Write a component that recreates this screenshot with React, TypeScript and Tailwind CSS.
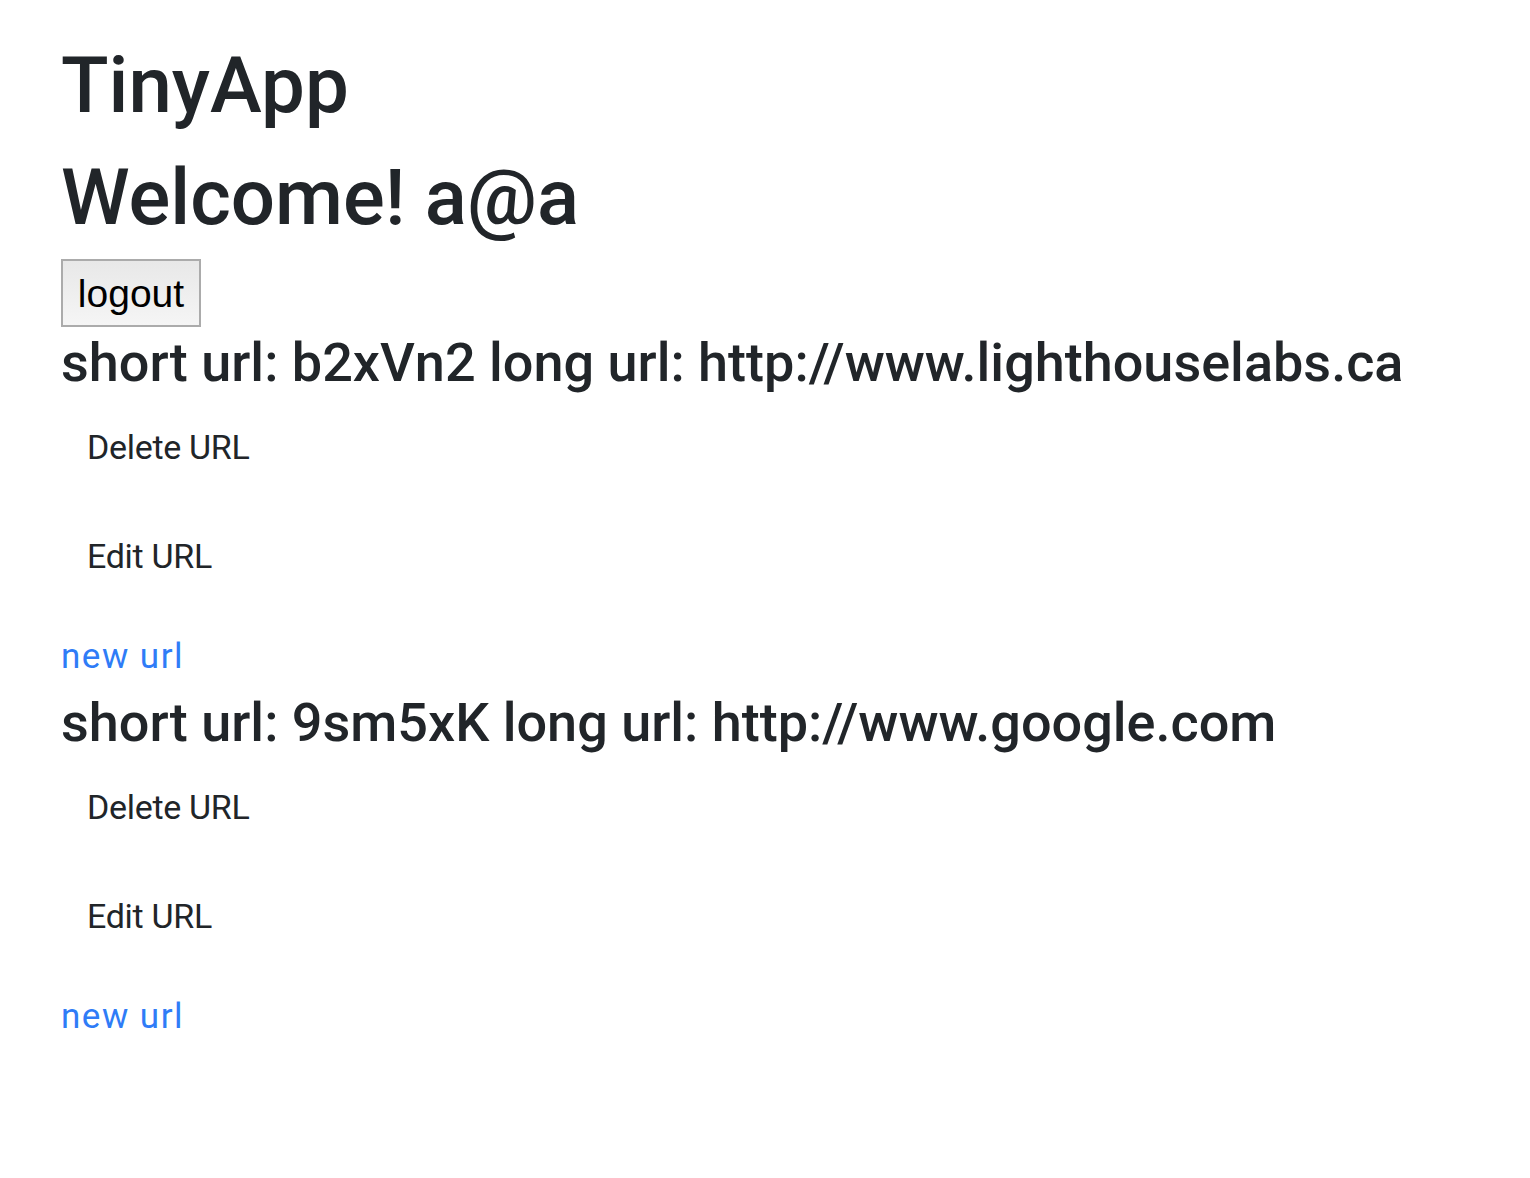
import React from "react";

type Url = { short: string; long: string };

const urls: Url[] = [
  { short: "b2xVn2", long: "http://www.lighthouselabs.ca" },
  { short: "9sm5xK", long: "http://www.google.com" },
];

function UrlBlock({ url }: { url: Url }) {
  return (
    <div className="mb-[10px]">
      <h3 className="text-[54px] leading-[64px] font-medium mb-[14px] whitespace-nowrap">
        short url: {url.short} long url: {url.long}
      </h3>
      <form className="mb-[33px]" onSubmit={(e) => e.preventDefault()}>
        <button
          type="submit"
          className="text-[34px] tracking-[-0.3px] leading-[48px] px-[24px] py-[12px] border-2 border-transparent text-[#212529] bg-transparent"
        >
          Delete URL
        </button>
      </form>
      <form className="mb-[39px]" onSubmit={(e) => e.preventDefault()}>
        <button
          type="submit"
          className="text-[34px] tracking-[-0.3px] leading-[48px] px-[24px] py-[12px] border-2 border-transparent text-[#212529] bg-transparent"
        >
          Edit URL
        </button>
      </form>
      <a href="#" className="block w-fit text-[35px] tracking-[1.5px] leading-[48px] text-[#2f7cf7]">
        new url
      </a>
    </div>
  );
}

export default function App() {
  return (
    <div className="min-h-screen bg-white text-[#212529] font-['Roboto',sans-serif] pl-[61px] pt-[39px]">
      <h1 className="text-[78px] leading-[94px] font-medium mb-[18px]">TinyApp</h1>
      <h1 className="text-[78px] leading-[94px] font-medium mb-[14px]">Welcome! a@a</h1>
      <form className="mb-[4px]" onSubmit={(e) => e.preventDefault()}>
        <button
          type="submit"
          className="flex items-center justify-center h-[68px] w-[140px] border-2 border-[#ababab] bg-gradient-to-b from-[#e8e8e8] to-[#f5f5f5] text-black text-[39px] font-['Liberation_Sans',sans-serif] leading-none"
        >
          logout
        </button>
      </form>
      {urls.map((u) => (
        <UrlBlock key={u.short} url={u} />
      ))}
    </div>
  );
}
